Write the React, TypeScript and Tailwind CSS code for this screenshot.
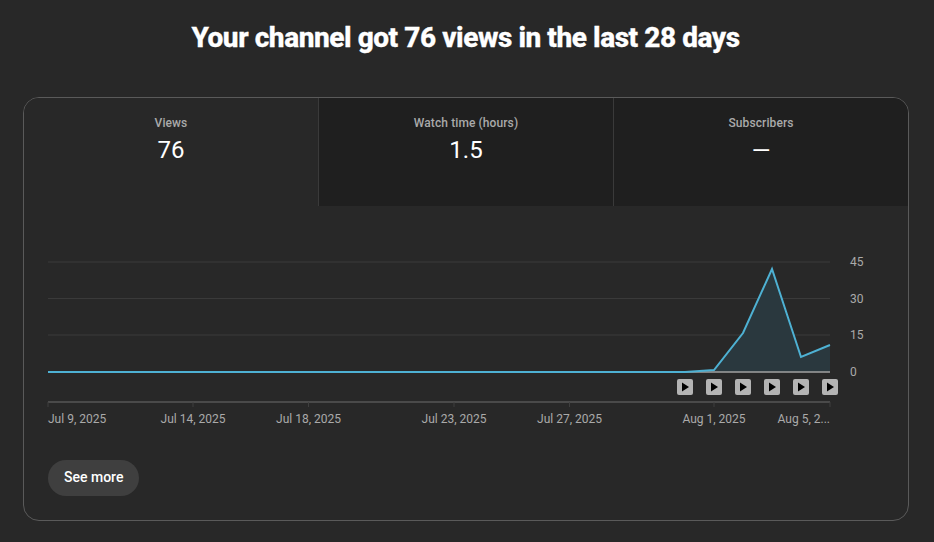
const xTicks = [
  { x: 48, label: "Jul 9, 2025", anchor: "start" },
  { x: 193, label: "Jul 14, 2025", anchor: "middle" },
  { x: 308.5, label: "Jul 18, 2025", anchor: "middle" },
  { x: 454, label: "Jul 23, 2025", anchor: "middle" },
  { x: 569.5, label: "Jul 27, 2025", anchor: "middle" },
  { x: 714, label: "Aug 1, 2025", anchor: "middle" },
  { x: 830, label: "Aug 5, 2...", anchor: "end" },
];
const yTicks = [
  { y: 262, label: "45", dy: 3.5 },
  { y: 298.5, label: "30", dy: 4.5 },
  { y: 335, label: "15", dy: 3.5 },
];
const plays = [685, 714, 743, 772, 801, 830];
const X0 = 48;
const Y0 = 250;

function Chart() {
  const pts = `48,372 685,372 714,370 743,333 772,269 801,357 830,345`;
  return (
    <svg width={840} height={184} viewBox={`${X0} ${Y0} 840 184`} className="block overflow-visible">
      {yTicks.map((t) => (
        <line key={t.y} x1={48} x2={830} y1={t.y} y2={t.y} stroke="#3a3a3a" strokeWidth={1} />
      ))}
      <polygon points={`${pts} 830,372`} fill="#2a383e" />
      <line x1={48} x2={830} y1={372} y2={372} stroke="#a0a0a0" strokeWidth={1.5} />
      <polyline points={pts} fill="none" stroke="#4eb1d3" strokeWidth={2} />
      {[...yTicks, { y: 371.5, label: "0", dy: 4.5 }].map((t) => (
        <text key={t.label} x={850} y={t.y + t.dy} fontSize={12} fill="#aaaaaa">{t.label}</text>
      ))}
      {plays.map((x) => (
        <g key={x}>
          <rect x={x - 8} y={379} width={16} height={16} rx={2} fill="#b4b4b4" />
          <path d={`M${x - 3} 382.5 L${x + 4} 387 L${x - 3} 391.5 Z`} fill="#000000" />
        </g>
      ))}
      <line x1={48} x2={830} y1={402} y2={402} stroke="#4a4a4a" strokeWidth={2} />
      {xTicks.map((t) => (
        <g key={t.label}>
          <line x1={t.x} x2={t.x} y1={402} y2={407} stroke="#3f3f3f" strokeWidth={1} />
          <text x={t.x} y={423} fontSize={12} fill="#aaaaaa" textAnchor={t.anchor as "start" | "middle" | "end"}>{t.label}</text>
        </g>
      ))}
    </svg>
  );
}

function Tab({ label, value, active, last, nudge }: { label: string; value: string; active?: boolean; last?: boolean; nudge?: boolean }) {
  return (
    <div
      className={`flex-1 h-[108px] flex flex-col items-center pt-[17px] ${active ? "bg-[#282828]" : "bg-[#1f1f1f]"} ${last ? "" : "border-r border-[#3a3a3a]"}`}
    >
      <div className="text-[12px] leading-[16px] font-medium tracking-[0.1px] text-[#aaaaaa]">{label}</div>
      <div className={`text-[24px] leading-[32px] text-white ${nudge ? "mt-[4px]" : "mt-[3px]"}`}>{value}</div>
    </div>
  );
}

export default function App() {
  return (
    <div className="w-[934px] h-[542px] overflow-hidden bg-[#282828] px-[23px] font-['Roboto',sans-serif]">
      <h1 className="h-[97px] pt-[19px] pr-[3px] text-center text-[28px] leading-[38px] font-extrabold tracking-[-0.44px] [-webkit-text-stroke:0.3px_white] text-white">
        Your channel got 76 views in the last 28 days
      </h1>
      <div className="w-[886px] h-[424px] rounded-[16px] border border-[#5a5a5a] overflow-hidden flex flex-col">
        <div className="flex">
          <Tab label="Views" value="76" active />
          <Tab label="Watch time (hours)" value="1.5" />
          <Tab label="Subscribers" value="—" last nudge />
        </div>
        <div className="pl-[24px] pt-[44px]">
          <Chart />
          <button className="mt-[26px] h-[36px] pb-[2px] px-[16px] rounded-full bg-[#3f3f3f] text-[14px] font-medium text-white">
            See more
          </button>
        </div>
      </div>
    </div>
  );
}
